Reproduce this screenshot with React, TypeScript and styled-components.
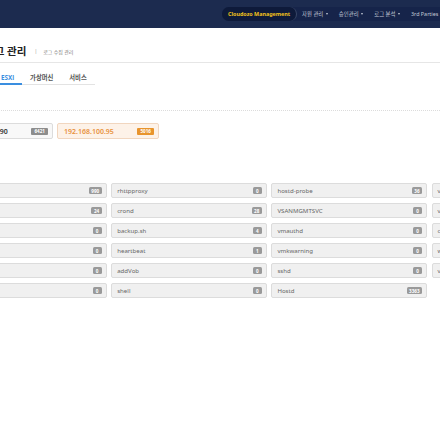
import React from "react";
import styled, { createGlobalStyle } from "styled-components";

const GlobalStyle = createGlobalStyle`
  html, body {
    margin: 0;
    padding: 0;
    background: #fff;
    overflow: hidden;
  }
  body {
    font-family: "Noto Sans", "Noto Sans CJK KR", sans-serif;
    color: #333;
  }
`;

const TopBar = styled.header`
  height: 28px;
  background: #1c2b4f;
  display: flex;
  align-items: center;
  padding-left: 222px;
  overflow: hidden;
`;

const NavGroup = styled.nav`
  display: flex;
  align-items: center;
  height: 14px;
  background: #16244a;
  border-radius: 7px 0 0 7px;
  white-space: nowrap;
  flex-shrink: 0;
`;

const Brand = styled.div`
  height: 14px;
  display: flex;
  align-items: center;
  padding: 0 6px 0 6px;
  background: #0e1a3a;
  border-radius: 7px;
  color: #f2c21b;
  font-weight: 700;
  font-size: 5.4px;
  border-right: 1px solid #3a4868;
`;

const NavItem = styled.div`
  display: flex;
  align-items: center;
  gap: 2.5px;
  color: #c3c9d6;
  font-size: 5.4px;
  padding: 0 6px 0 5px;
`;

const Caret = styled.span`
  width: 0;
  height: 0;
  border-left: 1.5px solid transparent;
  border-right: 1.5px solid transparent;
  border-top: 2px solid #c3c9d6;
`;

const Main = styled.main`
  margin-left: -49px;
`;

const PageHead = styled.div`
  display: flex;
  align-items: center;
  padding: 16px 0 4px 34px;
  border-bottom: 1px solid #e6e6e6;
`;

const Title = styled.h1`
  margin: 0;
  font-size: 10.5px;
  font-weight: 700;
  line-height: 14px;
  color: #222;
`;

const Sep = styled.span`
  margin: 0 6px 0 8px;
  font-size: 5px;
  color: #999;
`;

const Crumb = styled.span`
  font-size: 5px;
  color: #777;
`;

const Tabs = styled.div`
  display: flex;
  width: fit-content;
  margin: 10px 0 0 42px;
  border-bottom: 1px solid #e3e3e3;
`;

const Tab = styled.div<{ $active?: boolean }>`
  padding: 0 8px;
  font-size: 6.3px;
  font-weight: 700;
  line-height: 10px;
  color: ${(p) => (p.$active ? "#3a8ee0" : "#555")};
  border-bottom: 2px solid ${(p) => (p.$active ? "#3a8ee0" : "transparent")};
  margin-bottom: -1px;
`;

const Dotted = styled.div`
  margin-top: 25px;
  border-top: 1px dotted #dcdcdc;
`;

const HostRow = styled.div`
  display: flex;
  gap: 4px;
  margin-top: 12px;
`;

const HostCard = styled.div<{ $active?: boolean }>`
  width: 102px;
  height: 16px;
  box-sizing: border-box;
  display: flex;
  align-items: center;
  justify-content: space-between;
  padding: 0 4px 0 6px;
  border: 1px solid ${(p) => (p.$active ? "#f1d6bf" : "#dcdcdc")};
  background: ${(p) => (p.$active ? "#fdf2e8" : "#f8f8f8")};
  border-radius: 2px;
  font-size: 7px;
  font-weight: 600;
  color: ${(p) => (p.$active ? "#e8913c" : "#333")};
`;

const HostBadge = styled.span<{ $active?: boolean }>`
  height: 7px;
  padding: 0 3px;
  display: flex;
  align-items: center;
  border-radius: 1px;
  font-size: 4.6px;
  font-weight: 700;
  color: #fff;
  background: ${(p) => (p.$active ? "#e8942d" : "#8d8d8d")};
`;

const Grid = styled.div`
  display: grid;
  grid-template-columns: repeat(4, 155.7px);
  grid-template-rows: repeat(6, 15px);
  grid-auto-flow: column;
  column-gap: 4.5px;
  row-gap: 5.1px;
  margin-top: 44px;
`;

const ProcCard = styled.div`
  box-sizing: border-box;
  display: flex;
  align-items: center;
  justify-content: space-between;
  padding: 0 4px 0 5px;
  background: #f0f0f0;
  border: 1px solid #dcdcdc;
  border-radius: 2px;
  font-size: 6.1px;
  color: #666;
`;

const Count = styled.span`
  min-width: 9px;
  height: 7px;
  padding: 0 2.5px;
  box-sizing: border-box;
  display: flex;
  align-items: center;
  justify-content: center;
  border-radius: 1.5px;
  background: #9a9a9a;
  color: #fff;
  font-size: 4.6px;
  font-weight: 700;
`;

const procs: [string, string][] = [
  ["vmkernel", "990"],
  ["vobd", "24"],
  ["vpxa", "0"],
  ["fdm", "0"],
  ["vmkdevmgr", "0"],
  ["sfcb-vmware", "0"],
  ["rhttpproxy", "0"],
  ["crond", "28"],
  ["backup.sh", "4"],
  ["heartbeat", "1"],
  ["addVob", "0"],
  ["shell", "0"],
  ["hostd-probe", "36"],
  ["VSANMGMTSVC", "0"],
  ["vmauthd", "0"],
  ["vmkwarning", "0"],
  ["sshd", "0"],
  ["Hostd", "3363"],
  ["vsfwd", "0"],
  ["vmkeventd", "0"],
  ["cmmdsd", "0"],
  ["watchdog", "0"],
  ["vsansystem", "0"],
];

export default function App() {
  return (
    <>
      <GlobalStyle />
      <TopBar>
        <NavGroup>
          <Brand>Cloudozo Management</Brand>
          <NavItem>
            자원 관리 <Caret />
          </NavItem>
          <NavItem>
            승인관리 <Caret />
          </NavItem>
          <NavItem>
            로그 분석 <Caret />
          </NavItem>
          <NavItem>3rd Parties</NavItem>
        </NavGroup>
      </TopBar>
      <Main>
        <PageHead>
          <Title>로그 관리</Title>
          <Sep>|</Sep>
          <Crumb>로그 수집 관리</Crumb>
        </PageHead>
        <Tabs>
          <Tab $active>ESXi</Tab>
          <Tab>가상머신</Tab>
          <Tab>서비스</Tab>
        </Tabs>
        <Dotted />
        <HostRow>
          <HostCard>
            192.168.100.90 <HostBadge>6421</HostBadge>
          </HostCard>
          <HostCard $active>
            192.168.100.95 <HostBadge $active>5016</HostBadge>
          </HostCard>
        </HostRow>
        <Grid>
          {procs.map(([name, n]) => (
            <ProcCard key={name}>
              {name}
              <Count>{n}</Count>
            </ProcCard>
          ))}
        </Grid>
      </Main>
    </>
  );
}
